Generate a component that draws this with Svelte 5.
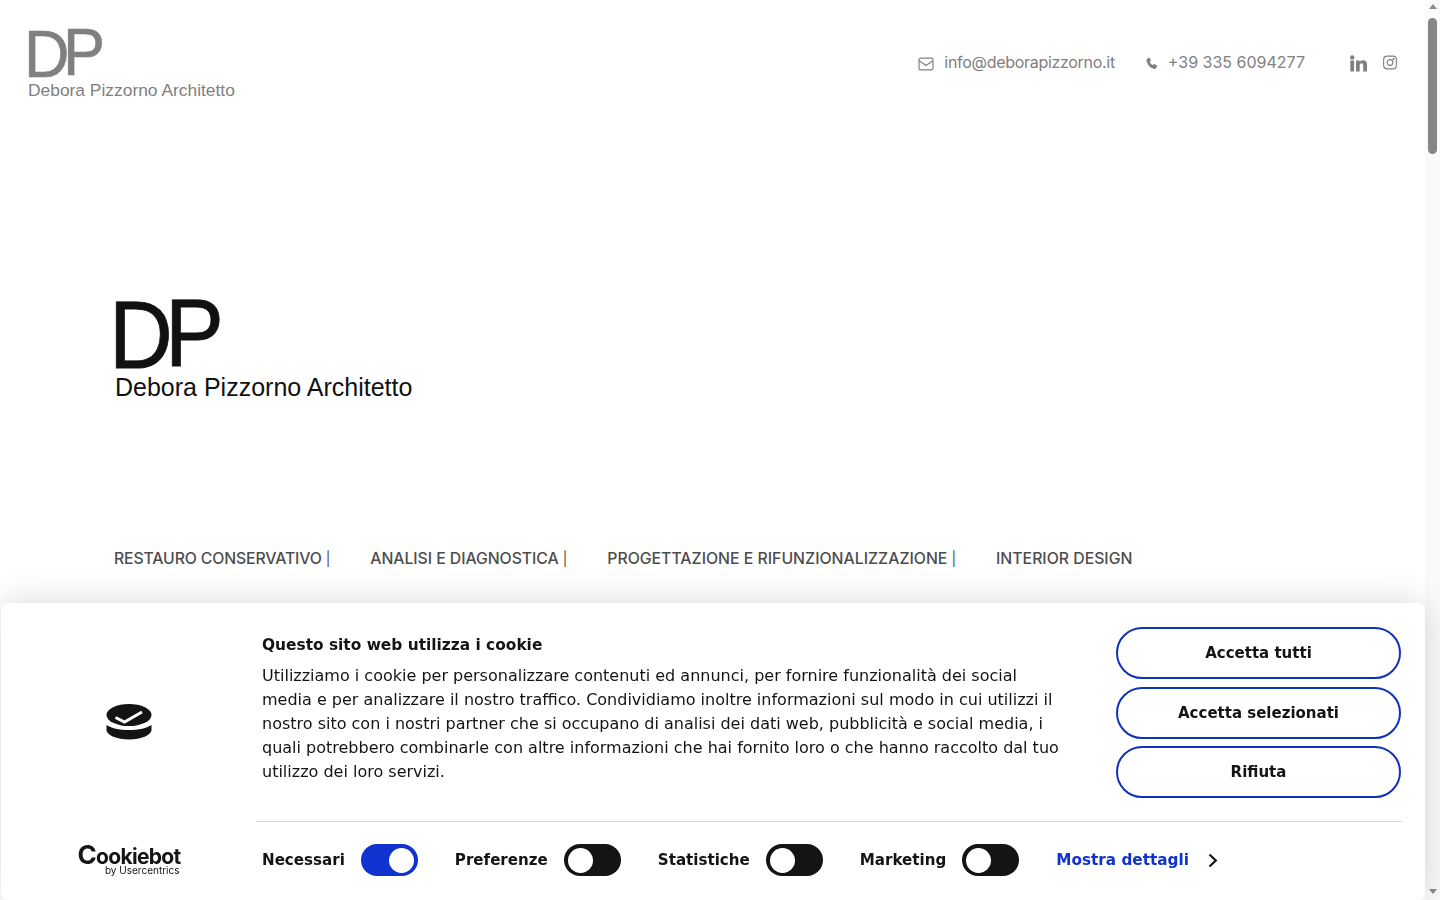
<script>
  const toggles = [
    { label: 'Necessari', on: true },
    { label: 'Preferenze', on: false },
    { label: 'Statistiche', on: false },
    { label: 'Marketing', on: false }
  ];
  const nav = [
    { text: 'RESTAURO CONSERVATIVO', pipe: true },
    { text: 'ANALISI E DIAGNOSTICA', pipe: true },
    { text: 'PROGETTAZIONE E RIFUNZIONALIZZAZIONE', pipe: true },
    { text: 'INTERIOR DESIGN', pipe: false }
  ];
</script>

<div class="shell">
  <div class="page">
    <header class="top">
      <div class="logo small">
        <div class="mono">D<span>P</span></div>
        <div class="name">Debora Pizzorno Architetto</div>
      </div>
      <div class="contacts">
        <a class="contact mail" href="#m">
          <svg width="16" height="14" viewBox="0 0 16 14" fill="none" stroke="#808080" stroke-width="1.2"><rect x="1" y="1.2" width="14" height="11.6" rx="1.6"/><path d="M1.2 3.800 8 8.600l6.800-4.800"/></svg>
          info@deborapizzorno.it
        </a>
        <a class="contact phone" href="#p">
          <svg width="13" height="13" viewBox="0 0 13 13" fill="#808080"><path d="M.9 1.900 3.200.5l1.900 3.100-1.300 1.200c.5 1.500 1.500 2.600 3 3.300l1.300-1.200 3.300 1.900-1.400 2.500c-.3.500-.8.700-1.400.6C4.400 11 1.500 8 .5 3.400.4 2.800.5 2.200.9 1.900z"/></svg>
          +39 335 6094277
        </a>
        <div class="social">
          <svg width="17" height="17" viewBox="0 0 17 16" fill="#808080"><rect x="0.300" y="5" width="3.800" height="11"/><circle cx="2.200" cy="2" r="2.200"/><path d="M6 5h3.600v1.500C10.200 5.500 11.400 4.700 13 4.700c3 0 4 1.900 4 4.900V16h-3.800v-5.700c0-1.400-.3-2.500-1.700-2.500s-1.800 1.100-1.800 2.500V16H6z"/></svg>
          <svg width="14" height="15" viewBox="0 0 15 15" fill="none" stroke="#808080" stroke-width="1.200"><rect x="0.700" y="0.700" width="13.600" height="13.600" rx="3.600"/><circle cx="7.500" cy="7.500" r="3.100"/><circle cx="11.300" cy="3.700" r="0.500" fill="#808080"/></svg>
        </div>
      </div>
    </header>

    <section class="hero">
      <div class="logo big">
        <div class="mono">D<span>P</span></div>
        <div class="name">Debora Pizzorno Architetto</div>
      </div>
    </section>

    <nav class="nav">
      {#each nav as item}
        <a href="#n">{item.text}{#if item.pipe}<span class="pipe">|</span>{/if}</a>
      {/each}
    </nav>
  </div>

  <aside class="scroll">
    <i class="arrow up"></i>
    <div class="thumb"></div>
    <i class="arrow down"></i>
  </aside>
</div>

<div class="dialog" role="dialog">
  <div class="brand">
    <svg class="mark" width="46" height="36" viewBox="0 0 46 36">
      <path fill="#141414" d="M.5 21C5 24 13 26 23 26S41 24 45.500 21V26C45.500 31 35 35.500 23 35.500S.5 31 .5 26Z"/>
      <ellipse fill="#141414" cx="23" cy="11" rx="22.500" ry="11"/>
      <path d="M9.500 13.500l9 4.500L36 8" fill="none" stroke="#fff" stroke-width="3"/>
    </svg>
    <div class="cb">
      <div class="cb-name"><span>C</span>ookiebot</div>
      <div class="cb-by">by Usercentrics</div>
    </div>
  </div>

  <div class="main">
    <div class="upper">
      <div class="copy">
        <h2>Questo sito web utilizza i cookie</h2>
        <p>Utilizziamo i cookie per personalizzare contenuti ed annunci, per fornire funzionalità dei social media e per analizzare il nostro traffico. Condividiamo inoltre informazioni sul modo in cui utilizzi il nostro sito con i nostri partner che si occupano di analisi dei dati web, pubblicità e social media, i quali potrebbero combinarle con altre informazioni che hai fornito loro o che hanno raccolto dal tuo utilizzo dei loro servizi.</p>
      </div>
      <div class="buttons">
        <button>Accetta tutti</button>
        <button>Accetta selezionati</button>
        <button class="last">Rifiuta</button>
      </div>
    </div>
    <div class="lower">
      {#each toggles as t}
        <div class="tg">
          <strong>{t.label}</strong>
          <span class="switch" class:on={t.on}><b></b></span>
        </div>
      {/each}
      <a class="details" href="#d">Mostra dettagli
        <svg width="10" height="15" viewBox="0 0 10 15" fill="none" stroke="#141414" stroke-width="2.200"><path d="M1.500 1.500 7.800 7.500 1.500 13.500"/></svg>
      </a>
    </div>
  </div>
</div>

<style>
  :global(body) { margin: 0; background: #fff; overflow: hidden; }
  .shell { display: flex; height: 900px; overflow: hidden; }
  .page { flex: 1; min-width: 0; font-family: Inter, "Liberation Sans", sans-serif; }

  .top { display: flex; justify-content: space-between; padding: 30px 28px 0 28px; height: 100px; box-sizing: border-box; }
  .logo { font-family: "Liberation Sans", Arial, sans-serif; }
  .mono { transform-origin: left center; }
  .mono span { display: inline-block; }
  .small { color: #808080; }
  .small .mono { font-size: 67px; line-height: 48px; height: 48px; letter-spacing: -6.900px; margin-left: -4px; transform: scaleX(.94); -webkit-text-stroke: .6px #808080; }
  .small .mono span { transform: translateY(-2px); }
  .small .name { font-size: 17.400px; line-height: 20px; margin-top: 2px; }

  .contacts { display: flex; align-items: flex-start; padding-top: 21px; color: #808080; font-size: 16px; line-height: 22px; }
  .contact { display: flex; align-items: center; color: inherit; text-decoration: none; }
  .mail { gap: 10px; margin-right: 31px; letter-spacing: -.3px; }
  .mail svg { margin-top: 3px; }
  .phone { gap: 9px; margin-right: 45px; }
  .phone svg { margin-top: 3px; }
  .social { display: flex; align-items: center; gap: 16px; height: 22px; }
  .social svg:first-child { margin-top: 2px; }

  .hero { padding: 200px 0 0 115px; height: 433px; box-sizing: border-box; }
  .big { color: #111; }
  .big .mono { font-size: 97px; line-height: 69px; height: 69px; letter-spacing: -8.500px; margin-left: -6px; transform: scaleX(.91); -webkit-text-stroke: .8px #111; }
  .big .mono span { transform: translateY(-2px); }
  .big .name { font-size: 25px; line-height: 28px; margin-top: 4px; }

  .nav { display: flex; gap: 40px; padding-left: 114px; font-size: 15.800px; line-height: 22px; margin-top: 15px; }
  .nav a { color: #4d4d4d; text-decoration: none; font-weight: 500; }
  .nav a:nth-child(1) { letter-spacing: -.14px; }
  .nav a:nth-child(2) { letter-spacing: -.05px; }
  .pipe { margin-left: 4px; font-weight: 400; font-size: 14px; }

  .scroll { width: 15px; flex: none; background: #fafafa; display: flex; flex-direction: column; align-items: center; justify-content: flex-start; position: relative; }
  .thumb { width: 9px; height: 136px; background: #868686; border-radius: 5px; margin-top: 9px; }
  .arrow { width: 0; height: 0; border-left: 4.500px solid transparent; border-right: 4.500px solid transparent; }
  .up { border-bottom: 5px solid #8a8a8a; margin-top: 4px; }
  .down { border-top: 5px solid #8a8a8a; position: absolute; bottom: 6px; }

  .dialog {
    position: fixed; left: 1px; top: 603px; width: 1424px; height: 297px;
    background: #fff; border-radius: 8px; box-shadow: 0 0 34px rgba(0,0,0,.16);
    display: flex; font-family: "DejaVu Sans", sans-serif; color: #141414;
  }
  .brand { width: 255px; flex: none; display: flex; flex-direction: column; align-items: center; box-sizing: border-box; }
  .mark { margin-top: 101px; }
  .cb { margin-top: 104px; width: 102px; font-family: Inter, "Liberation Sans", sans-serif; color: #141414; text-align: right; }
  .cb-name { font-size: 21px; line-height: 21px; font-weight: 700; letter-spacing: -.7px; white-space: nowrap; }
  .cb-name span { font-size: 26px; line-height: 21px; }
  .cb-by { font-size: 10px; line-height: 11px; margin-top: -2px; }

  .main { flex: 1; min-width: 0; padding-right: 23px; }
  .upper { display: flex; justify-content: space-between; height: 218px; border-bottom: 1px solid #d6d6d6; box-sizing: content-box; }
  .copy { width: 806px; padding: 32px 0 0 6px; }
  h2 { margin: 0 0 9px; font-size: 15.400px; line-height: 20px; font-weight: 700; }
  p { margin: 0; font-size: 16px; line-height: 24px; }
  .buttons { display: flex; flex-direction: column; width: 285px; margin-right: 1px; padding-top: 24px; gap: 8px; }
  button {
    height: 52px; box-sizing: border-box; background: #fff; border: 2px solid #1032b8; border-radius: 26px;
    font: 700 15px/20px "DejaVu Sans", sans-serif; color: #141414; padding: 0;
  }
  .last { margin-top: -1px; }

  .lower { display: flex; align-items: center; padding: 22px 0 0 6px; height: 32px; }
  .tg { display: flex; align-items: center; gap: 16px; margin-right: 37px; }
  .tg strong { font-size: 15.100px; line-height: 20px; }
  .switch { display: flex; align-items: center; width: 57px; height: 32px; border-radius: 16px; background: #141414; padding: 0 4px; box-sizing: border-box; }
  .switch b { width: 25px; height: 25px; border-radius: 50%; background: #fff; }
  .switch.on { background: #1032cf; justify-content: flex-end; }
  .details { display: flex; align-items: center; gap: 19px; color: #1032cf; font-weight: 700; font-size: 15.250px; text-decoration: none; }
</style>
